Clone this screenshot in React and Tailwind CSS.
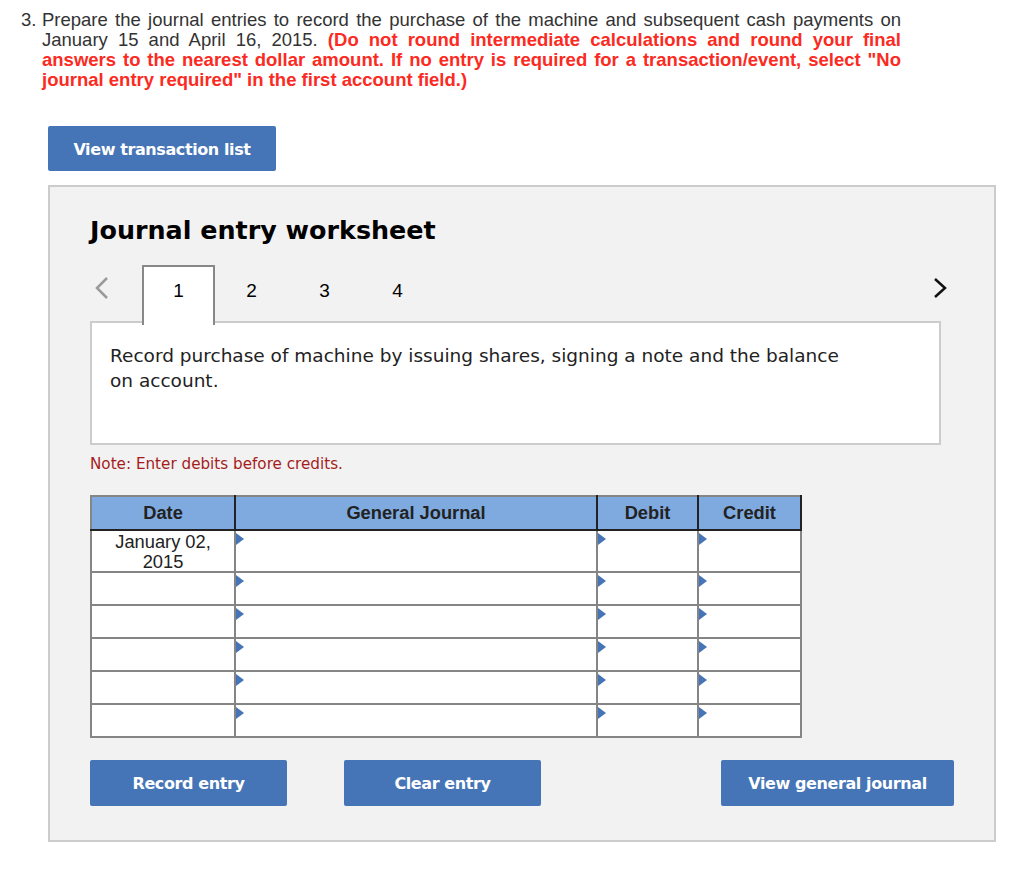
const sans = "font-['Liberation_Sans',Arial,sans-serif]";
const dv = "font-['DejaVu_Sans',Verdana,sans-serif]";

function Tri() {
  return (
    <svg className="absolute left-0 top-[2px]" width="8" height="12" viewBox="0 0 8 12">
      <path d="M0 0L8 6L0 12Z" fill="#4575b6" />
    </svg>
  );
}

function Row({ h, date }) {
  const td = "border-2 border-[#858585] bg-white p-0 align-top relative";
  return (
    <tr style={{ height: h }}>
      <td className={`${td} text-center text-[18.3px] leading-[20px] text-[#222]`}>
        <span className="block translate-y-px">{date}</span>
      </td>
      <td className={td}><Tri /></td>
      <td className={td}><Tri /></td>
      <td className={td}><Tri /></td>
    </tr>
  );
}

function Btn({ className, children }) {
  return (
    <button className={`block bg-[#4575b6] rounded-[2px] text-white font-bold text-[16px] tracking-[-0.4px] pt-[2px] ${dv} ${className}`}>
      {children}
    </button>
  );
}

const line = "[text-align:justify] [text-align-last:justify]";

export default function App() {
  const th = "border-2 border-[#858585] border-r-[#222] border-b-[#222] bg-[#7faadf] font-bold text-[18.3px] text-[#222] p-0";
  return (
    <div className={`w-[1024px] h-[891px] bg-white overflow-hidden ${sans}`}>
      <div className="flex pl-[21px] pt-[10px] w-[901px] text-[18.5px] leading-[20px] text-[#333]">
        <span className="w-[21px] shrink-0">3.</span>
        <div className="min-w-0 grow">
          <p className={line}>Prepare the journal entries to record the purchase of the machine and subsequent cash payments on</p>
          <p className={line}>
            January 15 and April 16, 2015. <b className="text-[#fb2a22]">(Do not round intermediate calculations and round your final</b>
          </p>
          <p className={`${line} font-bold text-[#fb2a22]`}>answers to the nearest dollar amount. If no entry is required for a transaction/event, select "No</p>
          <p className="font-bold text-[#fb2a22]">journal entry required" in the first account field.)</p>
        </div>
      </div>

      <div className="ml-[48px] mt-[36px]">
        <Btn className="w-[228px] h-[45px]">View transaction list</Btn>
      </div>

      <div className={`ml-[48px] mt-[14px] w-[948px] h-[657px] bg-[#f2f2f2] border-2 border-[#cccccc] px-[40px] pt-[25px] text-black ${dv}`}>
        <h2 className="font-bold text-[25.4px] leading-[36px]">Journal entry worksheet</h2>

        <div className="flex items-start mt-[17px] relative z-10 -mb-[4px]">
          <svg className="mt-[11px] ml-[5px]" width="14" height="24" viewBox="0 0 14 24">
            <path d="M12 2L2 12L12 22" fill="none" stroke="#999" strokeWidth="2.5" />
          </svg>
          <div className={`ml-[33px] w-[73px] h-[60px] bg-white border-2 border-b-0 border-[#888] text-center pt-[14px] text-[19px] leading-[20px] ${sans}`}>1</div>
          <div className={`w-[73px] text-center pt-[16px] text-[19px] leading-[20px] ${sans}`}>2</div>
          <div className={`w-[73px] text-center pt-[16px] text-[19px] leading-[20px] ${sans}`}>3</div>
          <div className={`w-[73px] text-center pt-[16px] text-[19px] leading-[20px] ${sans}`}>4</div>
          <svg className="ml-auto mt-[12px] mr-[7px]" width="14" height="22" viewBox="0 0 14 22">
            <path d="M2 2L12 11L2 20" fill="none" stroke="#111" strokeWidth="2.5" />
          </svg>
        </div>

        <div className="w-[851px] h-[124px] bg-white border-2 border-[#cccccc] pl-[18px] pt-[20px] pr-[50px] text-[18.5px] leading-[25px] text-[#222]">
          Record purchase of machine by issuing shares, signing a note and the balance<br />on account.
        </div>

        <p className="mt-[9px] text-[15.2px] leading-[20px] text-[#a51c1c]">Note: Enter debits before credits.</p>

        <table className={`mt-[21px] border-collapse table-fixed w-[711px] ${sans}`}>
          <colgroup>
            <col className="w-[144px]" />
            <col className="w-[362px]" />
            <col className="w-[101px]" />
            <col className="w-[103px]" />
          </colgroup>
          <thead>
            <tr className="h-[34px]">
              <th className={th}>Date</th>
              <th className={th}>General Journal</th>
              <th className={th}>Debit</th>
              <th className={th}>Credit</th>
            </tr>
          </thead>
          <tbody>
            <Row h={41} date={<>January 02,<br />2015</>} />
            <Row h={33} />
            <Row h={33} />
            <Row h={33} />
            <Row h={33} />
            <Row h={33} />
          </tbody>
        </table>

        <div className="flex mt-[22px]">
          <Btn className="w-[197px] h-[46px]">Record entry</Btn>
          <Btn className="w-[197px] h-[46px] ml-[57px]">Clear entry</Btn>
          <Btn className="w-[233px] h-[46px] ml-auto">View general journal</Btn>
        </div>
      </div>
    </div>
  );
}
